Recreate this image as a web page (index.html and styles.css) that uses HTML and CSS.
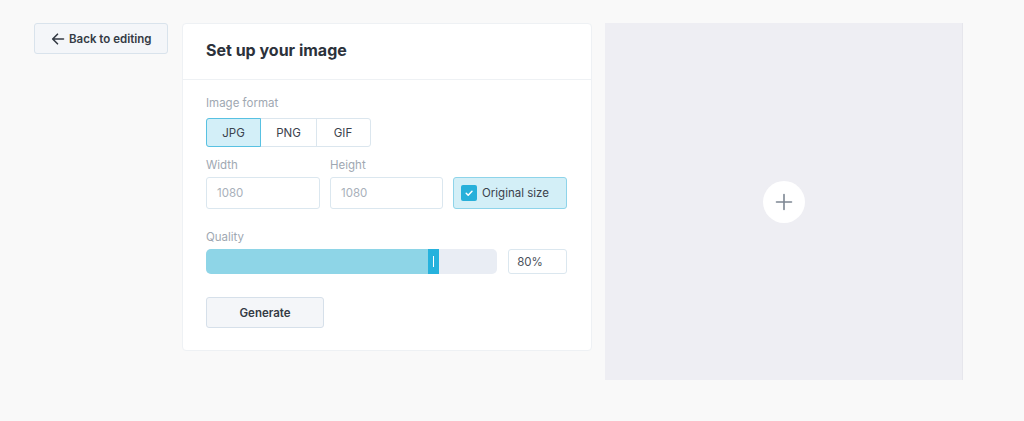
FILE: index.html
```html
<!DOCTYPE html>
<html>
<head>
<meta charset="utf-8">
<link rel="stylesheet" href="styles.css">
</head>
<body>
<div class="page">
  <div class="side">
    <button class="back-btn">
      <svg width="14" height="14" viewBox="0 0 14 14" fill="none" stroke="#333a44" stroke-width="1.6" stroke-linecap="round" stroke-linejoin="round"><path d="M12.5 7H1.8M6.5 2.2L1.7 7l4.8 4.8"/></svg>
      <span>Back to editing</span>
    </button>
  </div>
  <div class="card">
    <div class="card-head">Set up your image</div>
    <div class="card-body">
      <div class="label">Image format</div>
      <div class="seg">
        <div class="seg-item active">JPG</div>
        <div class="seg-item">PNG</div>
        <div class="seg-item">GIF</div>
      </div>
      <div class="size-grid">
        <div class="label">Width</div>
        <div class="label">Height</div>
        <div></div>
        <div class="input">1080</div>
        <div class="input">1080</div>
        <div class="orig">
          <span class="check"><svg width="10" height="10" viewBox="0 0 10 10" fill="none" stroke="#fff" stroke-width="1.5" stroke-linecap="round" stroke-linejoin="round"><path d="M2.2 5.2l2 2 3.8-4"/></svg></span>
          <span>Original size</span>
        </div>
      </div>
      <div class="label quality-label">Quality</div>
      <div class="quality-row">
        <div class="slider">
          <div class="fill"></div>
          <div class="thumb"><span></span></div>
        </div>
        <div class="value">80%</div>
      </div>
      <button class="gen-btn">Generate</button>
    </div>
  </div>
  <div class="preview">
    <div class="plus">
      <svg width="18" height="18" viewBox="0 0 18 18" fill="none" stroke="#7d8793" stroke-width="1.6" stroke-linecap="round"><path d="M9 1.5v15M1.5 9h15"/></svg>
    </div>
  </div>
</div>
</body>
</html>
```

FILE: styles.css
```css
* { box-sizing: border-box; }
html, body { margin: 0; padding: 0; }
body {
  background: #f9f9f9;
  font-family: Inter, "Noto Sans", sans-serif;
  color: #2e3540;
  width: 1024px;
  height: 421px;
  overflow: hidden;
}
.page {
  display: flex;
  align-items: flex-start;
  padding-top: 23px;
  padding-left: 34px;
}
.side { width: 148px; }
.back-btn {
  display: flex;
  align-items: center;
  gap: 4px;
  width: 134px;
  height: 31px;
  margin-top: 0;
  padding: 0 0 0 16px;
  background: #f4f6f9;
  border: 1px solid #d9e3ec;
  border-radius: 3px;
  font-family: inherit;
  font-size: 11.5px;
  font-weight: 600;
  color: #343b45;
}
.card {
  width: 410px;
  margin-top: 0;
  background: #fff;
  border: 1px solid #eef1f4;
  border-radius: 4px;
}
.card-head {
  height: 56px;
  padding-left: 23px;
  padding-bottom: 3px;
  display: flex;
  align-items: center;
  font-size: 16px;
  font-weight: 700;
  color: #2c323b;
  border-bottom: 1px solid #eef1f4;
}
.card-body {
  padding: 15px 24px 22px 23px;
}
.label {
  font-size: 11.5px;
  line-height: 16px;
  color: #a0a8b2;
}
.seg {
  display: flex;
  margin-top: 7px;
  width: 165px;
  height: 29px;
  border: 1px solid #dbe6ee;
  border-radius: 3px;
}
.seg-item {
  flex: 0 0 auto;
  display: flex;
  align-items: center;
  justify-content: center;
  font-size: 11.5px;
  color: #3b424c;
  border-right: 1px solid #dbe6ee;
}
.seg-item:nth-child(1) { width: 55px; }
.seg-item:nth-child(2) { width: 56px; }
.seg-item:nth-child(3) { width: 52px; border-right: none; }
.seg-item.active {
  background: #d3eff8;
  border: 1px solid #58c1e2;
  margin: -1px 0 -1px -1px;
  width: 55px;
  border-radius: 3px 0 0 3px;
}
.size-grid {
  display: grid;
  grid-template-columns: 114px 113px 114px;
  column-gap: 10px;
  row-gap: 4px;
  margin-top: 10px;
}
.input {
  height: 32px;
  border: 1px solid #dbe7ef;
  border-radius: 3px;
  display: flex;
  align-items: center;
  padding-left: 10px;
  font-size: 11.5px;
  color: #a8b0ba;
}
.orig {
  height: 32px;
  border: 1px solid #8ed4ea;
  background: #d3eff7;
  border-radius: 3px;
  display: flex;
  align-items: center;
  gap: 5px;
  padding-left: 7px;
  font-size: 11.5px;
  color: #3b424c;
}
.check {
  width: 16px;
  height: 16px;
  background: #27b0da;
  border-radius: 2px;
  display: flex;
  align-items: center;
  justify-content: center;
}
.quality-label { margin-top: 20px; }
.quality-row {
  display: flex;
  align-items: center;
  gap: 11px;
  margin-top: 4px;
}
.slider {
  position: relative;
  width: 292px;
  height: 25px;
  background: #e9edf4;
  border-radius: 5px;
  overflow: hidden;
}
.fill {
  width: 222px;
  height: 100%;
  background: #8ed5e7;
}
.thumb {
  position: absolute;
  left: 222px;
  top: 0;
  width: 11px;
  height: 25px;
  background: #26b2dd;
  display: flex;
  align-items: center;
  justify-content: center;
}
.thumb span {
  width: 1px;
  height: 11px;
  background: #fff;
}
.value {
  width: 59px;
  height: 25px;
  border: 1px solid #dbe7ef;
  border-radius: 3px;
  display: flex;
  align-items: center;
  padding-left: 8px;
  font-size: 11.5px;
  color: #4b525c;
}
.gen-btn {
  display: block;
  margin-top: 23px;
  width: 118px;
  height: 31px;
  background: #f4f6f9;
  border: 1px solid #d6e0ea;
  border-radius: 3px;
  font-family: inherit;
  font-size: 11.5px;
  font-weight: 600;
  color: #343b45;
}
.preview {
  margin-left: 13px;
  width: 358px;
  height: 357px;
  background: #eeeef3;
  border-right: 1px solid #e6e6ec;
  display: flex;
  align-items: center;
  justify-content: center;
}
.plus {
  width: 42px;
  height: 42px;
  border-radius: 50%;
  background: #fff;
  display: flex;
  align-items: center;
  justify-content: center;
}
```
